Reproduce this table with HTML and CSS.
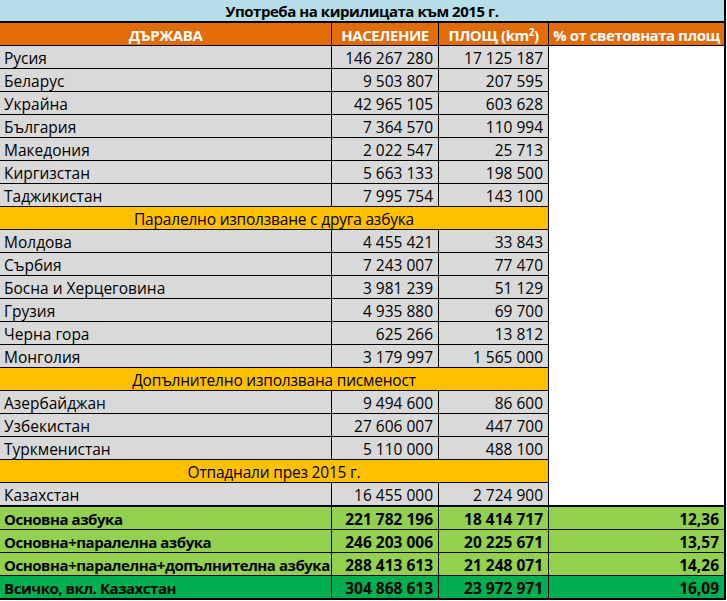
FILE: index.html
```html
<!DOCTYPE html>
<html lang="bg">
<head>
<meta charset="utf-8">
<title>Употреба на кирилицата към 2015 г.</title>
<link rel="stylesheet" href="styles.css">
</head>
<body>
<table class="sheet">
  <colgroup>
    <col class="c1"><col class="c2"><col class="c3"><col class="c4">
  </colgroup>
  <tr class="title"><td colspan="4">Употреба на кирилицата към 2015 г.</td></tr>
  <tr class="head">
    <td>ДЪРЖАВА</td><td>НАСЕЛЕНИЕ</td><td>ПЛОЩ (km<sup>2</sup>)</td><td class="last">% от световната площ</td>
  </tr>
  <tr class="row"><td class="name">Русия</td><td class="num">146 267 280</td><td class="num">17 125 187</td><td class="blank" rowspan="20"></td></tr>
  <tr class="row"><td class="name">Беларус</td><td class="num">9 503 807</td><td class="num">207 595</td></tr>
  <tr class="row"><td class="name">Украйна</td><td class="num">42 965 105</td><td class="num">603 628</td></tr>
  <tr class="row"><td class="name">България</td><td class="num">7 364 570</td><td class="num">110 994</td></tr>
  <tr class="row"><td class="name">Македония</td><td class="num">2 022 547</td><td class="num">25 713</td></tr>
  <tr class="row"><td class="name">Киргизстан</td><td class="num">5 663 133</td><td class="num">198 500</td></tr>
  <tr class="row"><td class="name">Таджикистан</td><td class="num">7 995 754</td><td class="num">143 100</td></tr>
  <tr class="section"><td colspan="3">Паралелно използване с друга азбука</td></tr>
  <tr class="row"><td class="name">Молдова</td><td class="num">4 455 421</td><td class="num">33 843</td></tr>
  <tr class="row"><td class="name">Сърбия</td><td class="num">7 243 007</td><td class="num">77 470</td></tr>
  <tr class="row"><td class="name">Босна и Херцеговина</td><td class="num">3 981 239</td><td class="num">51 129</td></tr>
  <tr class="row"><td class="name">Грузия</td><td class="num">4 935 880</td><td class="num">69 700</td></tr>
  <tr class="row"><td class="name">Черна гора</td><td class="num">625 266</td><td class="num">13 812</td></tr>
  <tr class="row"><td class="name">Монголия</td><td class="num">3 179 997</td><td class="num">1 565 000</td></tr>
  <tr class="section"><td colspan="3">Допълнително използвана писменост</td></tr>
  <tr class="row"><td class="name">Азербайджан</td><td class="num">9 494 600</td><td class="num">86 600</td></tr>
  <tr class="row"><td class="name">Узбекистан</td><td class="num">27 606 007</td><td class="num">447 700</td></tr>
  <tr class="row"><td class="name">Туркменистан</td><td class="num">5 110 000</td><td class="num">488 100</td></tr>
  <tr class="section"><td colspan="3">Отпаднали през 2015 г.</td></tr>
  <tr class="row endrow"><td class="name">Казахстан</td><td class="num">16 455 000</td><td class="num">2 724 900</td></tr>
  <tr class="total"><td class="name">Основна азбука</td><td class="num">221 782 196</td><td class="num">18 414 717</td><td class="num last">12,36</td></tr>
  <tr class="total"><td class="name">Основна+паралелна азбука</td><td class="num">246 203 006</td><td class="num">20 225 671</td><td class="num last">13,57</td></tr>
  <tr class="total"><td class="name">Основна+паралелна+допълнителна азбука</td><td class="num">288 413 613</td><td class="num">21 248 071</td><td class="num last">14,26</td></tr>
  <tr class="total grand"><td class="name">Всичко, вкл. Казахстан</td><td class="num">304 868 613</td><td class="num">23 972 971</td><td class="num last">16,09</td></tr>
</table>
</body>
</html>
```

FILE: styles.css
```css
html, body {
  margin: 0;
  padding: 0;
  background: #ffffff;
}

.sheet {
  border-collapse: separate;
  border-spacing: 0;
  table-layout: fixed;
  width: 726px;
  font-family: "Open Sans", "Noto Sans", sans-serif;
  font-size: 15.5px;
  color: #000;
}

.c1 { width: 332px; }
.c2 { width: 107px; }
.c3 { width: 110px; }
.c4 { width: 177px; }

.sheet td {
  padding: 2px 4px 0;
  height: 20px;
  line-height: 20px;
  white-space: nowrap;
  overflow: hidden;
  border-right: 1px solid #000;
  border-bottom: 1px solid #000;
  box-sizing: content-box;
}

.sheet td.last,
.sheet td.blank {
  border-right: 2px solid #000;
}

.title td {
  background: #b7dee8;
  text-align: center;
  font-weight: 700;
  font-size: 15px;
  letter-spacing: -0.45px;
  height: 19px;
  line-height: 19px;
  border-bottom: 2px solid #000;
  border-right: 2px solid #000;
}

.head td {
  background: #e26b0a;
  color: #fff;
  font-weight: 700;
  font-size: 15px;
  letter-spacing: -0.45px;
  text-align: center;
}

.head sup {
  font-size: 0.65em;
  line-height: 0;
  vertical-align: 0.55em;
}

.row td {
  background: #d9d9d9;
}

.row td.blank {
  background: #ffffff;
  border-bottom: 2px solid #000;
}

.name { text-align: left; }
.num { text-align: right; }
.sheet td.num { padding-right: 5px; padding-left: 3px; }

.section td {
  background: #ffc000;
  text-align: center;
  letter-spacing: -0.2px;
}

.endrow td {
  border-bottom: 2px solid #000;
}

.total td {
  background: #92d050;
  font-weight: 700;
}

.total td.name {
  font-size: 15px;
  letter-spacing: -0.45px;
}

.grand td {
  background: #00b050;
  border-bottom: 2px solid #000;
}
```
